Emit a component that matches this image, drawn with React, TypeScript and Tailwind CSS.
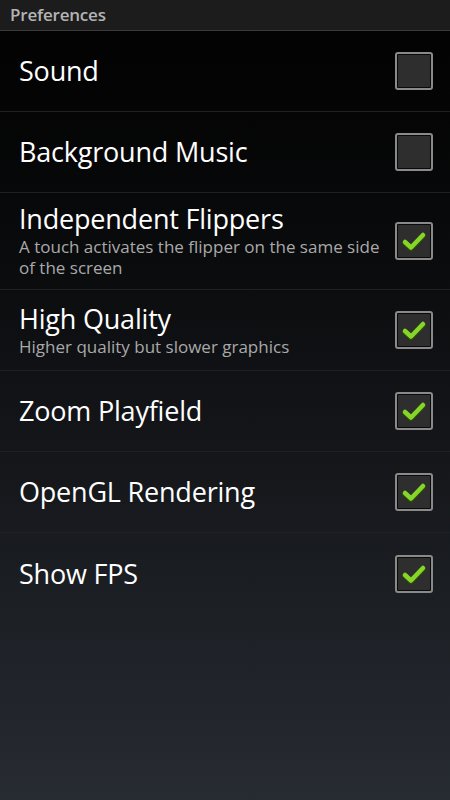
import React from "react";

type Item = { title: string; sub?: string; checked: boolean; tall?: boolean };

const items: Item[] = [
  { title: "Sound", checked: false },
  { title: "Background Music", checked: false },
  { title: "Independent Flippers", sub: "A touch activates the flipper on the same side of the screen", checked: true, tall: true },
  { title: "High Quality", sub: "Higher quality but slower graphics", checked: true },
  { title: "Zoom Playfield", checked: true },
  { title: "OpenGL Rendering", checked: true },
  { title: "Show FPS", checked: true },
];

function Box({ checked }: { checked: boolean }) {
  return (
    <div className="w-[38px] h-[38px] rounded-[3px] border-2 border-[#8a8a8a] bg-[#0a0a0a] p-[1px] shrink-0">
      <div className="w-full h-full bg-[#2e2e2e] flex items-center justify-center">
        {checked && (
          <svg width="26" height="22" viewBox="0 0 26 22">
            <path d="M4 12 L10 17.5 L22 5" fill="none" stroke="#2a4a0a" strokeWidth="5.5" strokeLinecap="round" strokeLinejoin="round" transform="translate(0,1)" />
            <path d="M4 12 L10 17.5 L22 5" fill="none" stroke="#86d62a" strokeWidth="4.5" strokeLinecap="round" strokeLinejoin="round" />
          </svg>
        )}
      </div>
    </div>
  );
}

export default function App() {
  return (
    <div
      className="w-[450px] h-[800px] bg-gradient-to-b from-[#020202] to-[#272b32] flex flex-col"
      style={{ fontFamily: "'Open Sans', 'Noto Sans', sans-serif" }}
    >
      <div className="h-[31px] bg-[#1c1c1c] border-b border-[#3a3a3a] flex items-center px-[10px]">
        <span className="text-[17px] font-semibold text-[#b4b4b4] tracking-[-0.2px]">Preferences</span>
      </div>
      {items.map((it, i) => (
        <div
          key={i}
          className={`${it.tall ? "h-[97px]" : "h-[81px]"} ${i < items.length - 1 ? "border-b border-[#1f2024]" : ""} flex items-center pl-[19px] pr-[17px]`}
        >
          <div className="flex-1 flex flex-col">
            <span className="text-[27px] leading-[30px] text-white tracking-[-0.2px]">{it.title}</span>
            {it.sub && (
              <span className="text-[17px] leading-[21px] text-[#a9a9a9] pr-[8px] mt-[2px]">{it.sub}</span>
            )}
          </div>
          <Box checked={it.checked} />
        </div>
      ))}
    </div>
  );
}
